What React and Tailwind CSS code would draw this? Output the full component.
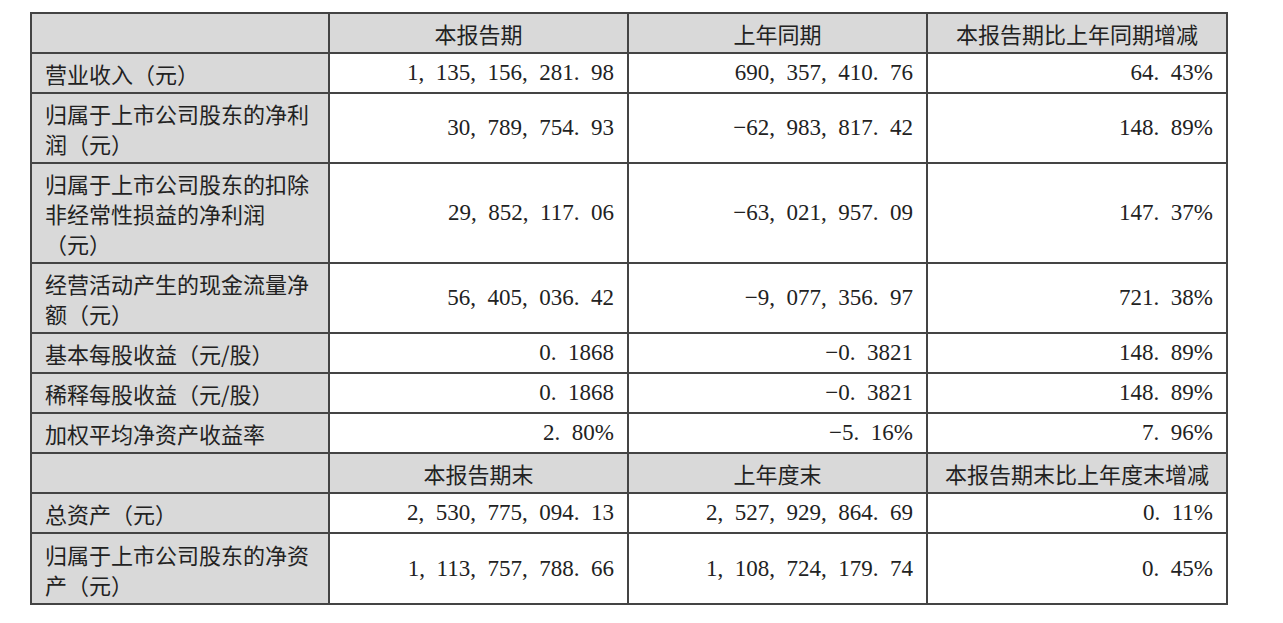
import React from 'react';

const cjk = { fontFamily: '"Noto Sans CJK SC", "Noto Sans", sans-serif' };
const num = { fontFamily: '"Liberation Serif", "Times New Roman", serif' };

const fmt = (s) => s.replace(/([,.])/g, '$1  ').replace(/^-/, '−');

const rows = [
  { label: '营业收入（元）', a: '1,135,156,281.98', b: '690,357,410.76', c: '64.43%', h: 'h-[40px]' },
  { label: '归属于上市公司股东的净利\n润（元）', a: '30,789,754.93', b: '-62,983,817.42', c: '148.89%', h: 'h-[70px]' },
  { label: '归属于上市公司股东的扣除\n非经常性损益的净利润\n（元）', a: '29,852,117.06', b: '-63,021,957.09', c: '147.37%', h: 'h-[100px]' },
  { label: '经营活动产生的现金流量净\n额（元）', a: '56,405,036.42', b: '-9,077,356.97', c: '721.38%', h: 'h-[70px]' },
  { label: '基本每股收益（元/股）', a: '0.1868', b: '-0.3821', c: '148.89%', h: 'h-[40px]' },
  { label: '稀释每股收益（元/股）', a: '0.1868', b: '-0.3821', c: '148.89%', h: 'h-[40px]' },
  { label: '加权平均净资产收益率', a: '2.80%', b: '-5.16%', c: '7.96%', h: 'h-[40px]' },
];

const rows2 = [
  { label: '总资产（元）', a: '2,530,775,094.13', b: '2,527,929,864.69', c: '0.11%', h: 'h-[40px]' },
  { label: '归属于上市公司股东的净资\n产（元）', a: '1,113,757,788.66', b: '1,108,724,179.74', c: '0.45%', h: 'h-[71px]' },
];

const HeaderRow = ({ cols }) => (
  <tr className="h-[40px] bg-[#d9d9d9]">
    <td className="border-2 border-[#444]" />
    {cols.map((c) => (
      <td key={c} className="border-2 border-[#444] text-center text-[22px] leading-[30px] text-[#222]" style={cjk}>
        {c}
      </td>
    ))}
  </tr>
);

const DataRow = ({ r }) => (
  <tr className={r.h}>
    <td className="border-2 border-[#444] bg-[#d9d9d9] pl-[13px] pr-[4px] py-[4px] align-middle whitespace-pre-line text-[22px] leading-[30px] text-[#222]" style={cjk}>
      {r.label}
    </td>
    {[r.a, r.b, r.c].map((v, i) => (
      <td key={i} className="border-2 border-[#444] pr-[13px] text-right align-middle whitespace-pre text-[23px] leading-[30px] text-[#222]" style={num}>
        {fmt(v)}
      </td>
    ))}
  </tr>
);

export default function App() {
  return (
    <div className="min-h-screen bg-white pl-[30px] pt-[12px]">
      <table className="w-[1196px] table-fixed border-collapse">
        <colgroup>
          <col className="w-[298px]" />
          <col className="w-[299px]" />
          <col className="w-[299px]" />
          <col className="w-[300px]" />
        </colgroup>
        <tbody>
          <HeaderRow cols={['本报告期', '上年同期', '本报告期比上年同期增减']} />
          {rows.map((r) => (
            <DataRow key={r.label} r={r} />
          ))}
          <HeaderRow cols={['本报告期末', '上年度末', '本报告期末比上年度末增减']} />
          {rows2.map((r) => (
            <DataRow key={r.label} r={r} />
          ))}
        </tbody>
      </table>
    </div>
  );
}
